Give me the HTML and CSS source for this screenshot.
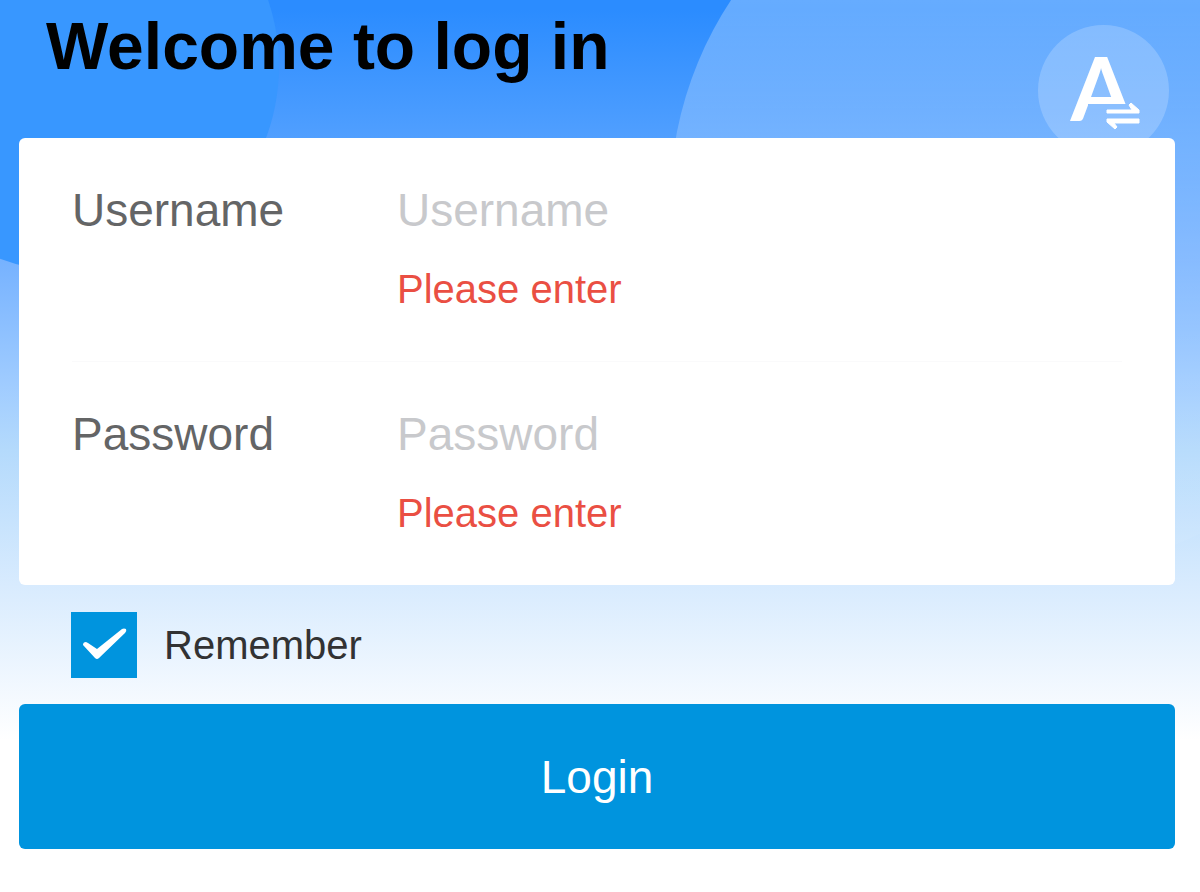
FILE: index.html
```
<!DOCTYPE html>
<html lang="en">
  <head>
    <meta charset="UTF-8" />
    <meta name="viewport" content="width=device-width, initial-scale=1.0" />
    <title>Login</title>
    <link rel="stylesheet" href="styles.css">
  </head>
  <body>
    <main class="login-page">
      <header class="login-header">
        <h1>Welcome to log in</h1>
        <button type="button" class="lang-btn" aria-label="Switch language">
          <svg viewBox="0 0 131 131" width="131" height="131">
            <defs>
              <clipPath id="letter-clip">
                <path d="M0 0H131V79H50V131H0Z" />
              </clipPath>
            </defs>
            <text class="lang-letter" x="63" y="96" text-anchor="middle" clip-path="url(#letter-clip)">A</text>
            <path class="lang-arrows" d="M69 85H94L91 80L93 78L101 85V88H69ZM101 94V98H76L79 102L77 104L69 97V94Z" />
          </svg>
        </button>
      </header>

      <form class="login-form">
        <div class="card">
          <div class="field">
            <label for="username">Username</label>
            <div class="field-value">
              <input type="text" id="username" placeholder="Username" />
              <p class="error">Please enter</p>
            </div>
          </div>
          <div class="field">
            <label for="password">Password</label>
            <div class="field-value">
              <input type="password" id="password" placeholder="Password" />
              <p class="error">Please enter</p>
            </div>
          </div>
        </div>

        <div class="remember">
          <span class="checkbox">
            <input type="checkbox" id="remember" checked />
            <svg viewBox="0 0 66 66" width="66" height="66">
              <path d="M12 33Q12 30 15 30L17 31L26 37L51 17Q53 16 55 17Q56 19 54 21L28 46Q26 48 24 46Z" />
            </svg>
          </span>
          <label for="remember">Remember</label>
        </div>

        <button type="submit" class="login-btn">Login</button>
      </form>
    </main>
  </body>
</html>
```

FILE: styles.css
```
* {
  box-sizing: border-box;
}
body {
  margin: 0;
  font-family: "Liberation Sans", Arial, Helvetica, sans-serif;
  background: #ffffff;
}
.login-page {
  position: relative;
  overflow: hidden;
  min-height: 100vh;
  padding: 0 25px 0 19px;
  background: linear-gradient(
    #2b8cff 0,
    #2b8cff 10px,
    #509fff 137px,
    #76b2ff 260px,
    #a0ccff 385px,
    #b4dafc 450px,
    #d8ebfe 585px,
    #ffffff 740px
  );
}
/* background circles */
.login-page::before,
.login-page::after {
  content: "";
  position: absolute;
  border-radius: 50%;
}
.login-page::before {
  top: -140px;
  left: -133px;
  width: 412px;
  height: 412px;
  background: #3897ff;
}
.login-page::after {
  top: -165px;
  right: -206px;
  width: 736px;
  height: 736px;
  background: linear-gradient(
    rgba(255, 255, 255, 0.28) 165px,
    rgba(255, 255, 255, 0.2) 300px,
    rgba(255, 255, 255, 0.08) 500px,
    rgba(255, 255, 255, 0.04)
  );
}
.login-header,
.login-form {
  position: relative;
  z-index: 1;
}
.login-header {
  display: flex;
  justify-content: space-between;
  align-items: flex-start;
  height: 138px;
  padding: 0 6px 0 27px;
}
h1 {
  margin: 0;
  font-size: 66px;
  line-height: 92px;
  color: #000000;
}
.lang-btn {
  flex: none;
  width: 131px;
  height: 131px;
  margin-top: 25px;
  padding: 0;
  border: none;
  border-radius: 50%;
  background: rgba(255, 255, 255, 0.2);
  cursor: pointer;
}
.lang-btn svg {
  display: block;
}
.lang-letter {
  font-family: Lato, sans-serif;
  font-size: 88px;
  font-weight: bold;
  fill: #ffffff;
}
.lang-arrows {
  fill: #ffffff;
  stroke: #ffffff;
  stroke-width: 1px;
  stroke-linejoin: round;
}
.card {
  background: #ffffff;
  border-radius: 6px;
}
.field {
  display: flex;
  margin: 0 53px;
  padding: 32px 0;
  font-size: 46px;
  line-height: 80px;
}
.field + .field {
  border-top: 1px solid #fafafb;
}
.field label {
  flex: none;
  width: 325px;
  color: #646566;
}
.field-value {
  flex: 1;
  min-width: 0;
}
.field input {
  display: block;
  width: 100%;
  height: 80px;
  padding: 0;
  border: none;
  outline: none;
  background: transparent;
  font: inherit;
  color: #323233;
}
.field input::placeholder {
  color: #c8c9cc;
  opacity: 1;
}
.error {
  margin: 0;
  font-size: 40px;
  line-height: 79px;
  color: #ea4f43;
}
.remember {
  display: flex;
  align-items: center;
  gap: 27px;
  padding: 27px 52px 26px;
  font-size: 40px;
  color: #323233;
}
.checkbox {
  position: relative;
  width: 66px;
  height: 66px;
}
.checkbox input {
  appearance: none;
  display: block;
  width: 66px;
  height: 66px;
  margin: 0;
  border: 1px solid #0094de;
  background: #ffffff;
}
.checkbox input:checked {
  background: #0094de;
}
.checkbox svg {
  position: absolute;
  top: 0;
  left: 0;
  fill: #ffffff;
  pointer-events: none;
}
.login-btn {
  display: block;
  width: 100%;
  height: 145px;
  border: none;
  border-radius: 6px;
  background: #0094de;
  color: #ffffff;
  font-family: inherit;
  font-size: 46px;
  cursor: pointer;
}
```
